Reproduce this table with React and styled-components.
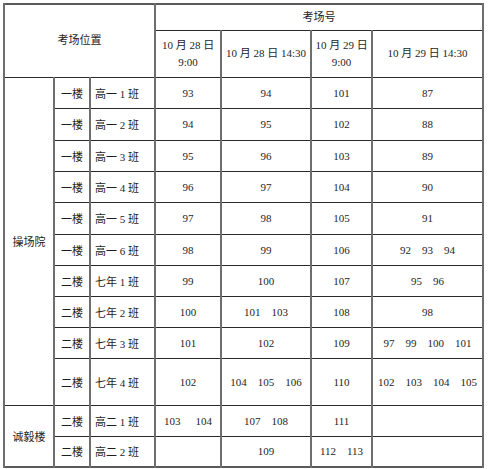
import React from "react";
import styled, { createGlobalStyle } from "styled-components";

const GlobalStyle = createGlobalStyle`
  html, body { margin: 0; padding: 0; background: #ffffff; }
  body {
    font-family: "Liberation Serif", "Noto Sans CJK SC", serif;
    font-size: 11px;
    color: #1e1e1e;
  }
`;

const Sheet = styled.table`
  margin: 3px 0 0 3px;
  width: 479px;
  border-collapse: collapse;
  table-layout: fixed;
  border: 2px solid #5a5a5a;
`;

const Row = styled.tr`
  height: ${(p) => p.$h}px;
`;

const HeadCell = styled.th`
  font-weight: normal;
  text-align: center;
  vertical-align: middle;
  padding: 0 3px;
  line-height: 17px;
  border-top: 1px solid #2a2a2a;
  border-bottom: 1px solid #2a2a2a;
  border-left: 2px solid #6e6e6e;
  border-right: 2px solid #6e6e6e;
`;

const Cell = styled.td`
  text-align: ${(p) => (p.$left ? "left" : "center")};
  vertical-align: middle;
  padding: ${(p) => (p.$left ? "0 0 0 4px" : "0 3px")};
  white-space: nowrap;
  border-top: 1px solid #2a2a2a;
  border-bottom: 1px solid #2a2a2a;
  border-left: 2px solid #6e6e6e;
  border-right: 2px solid #6e6e6e;
`;

const Nums = styled.span`
  display: flex;
  justify-content: ${(p) => (p.$spread ? "space-between" : "center")};
  gap: ${(p) => (p.$spread ? 0 : 11)}px;
  padding: ${(p) => (p.$spread ? "0 5px" : "0")};
`;

const rows = [
  { floor: "一楼", cls: "高一 1 班", c: [["93"], ["94"], ["101"], ["87"]] },
  { floor: "一楼", cls: "高一 2 班", c: [["94"], ["95"], ["102"], ["88"]] },
  { floor: "一楼", cls: "高一 3 班", c: [["95"], ["96"], ["103"], ["89"]] },
  { floor: "一楼", cls: "高一 4 班", c: [["96"], ["97"], ["104"], ["90"]] },
  { floor: "一楼", cls: "高一 5 班", c: [["97"], ["98"], ["105"], ["91"]] },
  { floor: "一楼", cls: "高一 6 班", c: [["98"], ["99"], ["106"], ["92", "93", "94"]] },
  { floor: "二楼", cls: "七年 1 班", c: [["99"], ["100"], ["107"], ["95", "96"]] },
  { floor: "二楼", cls: "七年 2 班", c: [["100"], ["101", "103"], ["108"], ["98"]] },
  { floor: "二楼", cls: "七年 3 班", c: [["101"], ["102"], ["109"], ["97", "99", "100", "101"]] },
  { floor: "二楼", cls: "七年 4 班", h: 47, c: [["102"], ["104", "105", "106"], ["110"], ["102", "103", "104", "105"]] },
  { floor: "二楼", cls: "高二 1 班", c: [["103", "104"], ["107", "108"], ["111"], []], spread: 0 },
  { floor: "二楼", cls: "高二 2 班", c: [[], ["109"], ["112", "113"], []] },
];

const heights = [31, 32, 31, 31, 32, 31, 31, 31, 31, 47, 31, 31];

const colWidths = [50, 36, 65, 66, 90, 61, 111];

export default function App() {
  return (
    <>
      <GlobalStyle />
      <Sheet>
        <colgroup>
          {colWidths.map((w, i) => (
            <col key={i} style={{ width: w }} />
          ))}
        </colgroup>
        <thead>
          <Row $h={26}>
            <HeadCell colSpan={3} rowSpan={2}>考场位置</HeadCell>
            <HeadCell colSpan={4}>考场号</HeadCell>
          </Row>
          <Row $h={47}>
            <HeadCell>10 月 28 日 9:00</HeadCell>
            <HeadCell>10 月 28 日 14:30</HeadCell>
            <HeadCell>10 月 29 日 9:00</HeadCell>
            <HeadCell>10 月 29 日 14:30</HeadCell>
          </Row>
        </thead>
        <tbody>
          {rows.map((r, i) => (
            <Row key={i} $h={heights[i]}>
              {i === 0 && <Cell rowSpan={10}>操场院</Cell>}
              {i === 10 && <Cell rowSpan={2}>诚毅楼</Cell>}
              <Cell>{r.floor}</Cell>
              <Cell $left>{r.cls}</Cell>
              {r.c.map((nums, j) => (
                <Cell key={j}>
                  {nums.length > 0 && (
                    <Nums $spread={r.spread === j}>
                      {nums.map((n, k) => (
                        <span key={k}>{n}</span>
                      ))}
                    </Nums>
                  )}
                </Cell>
              ))}
            </Row>
          ))}
        </tbody>
      </Sheet>
    </>
  );
}
